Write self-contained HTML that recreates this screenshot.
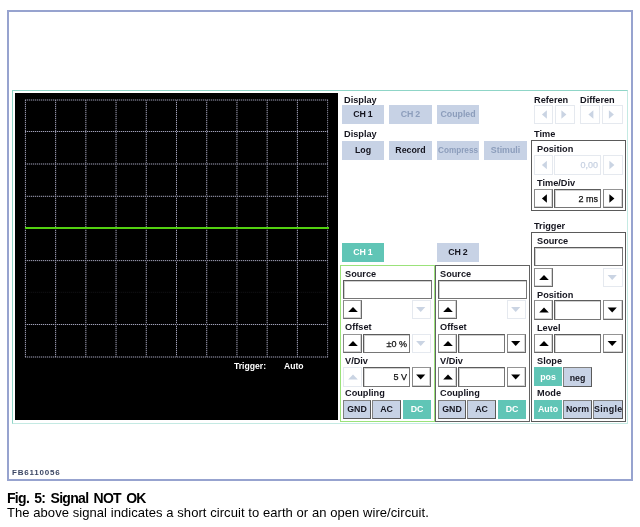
<!DOCTYPE html>
<html><head><meta charset="utf-8"><title>Fig. 5</title>
<style>
html,body{margin:0;padding:0;background:#fff;}
body{width:640px;height:527px;position:relative;overflow:hidden;font-family:"Liberation Sans",sans-serif;}
#w{position:absolute;left:0;top:0;width:640px;height:527px;will-change:transform;}
.a{position:absolute;white-space:nowrap;}
.lb{font-size:9.2px;font-weight:bold;color:#15151f;}
.tw{font-size:8.6px;font-weight:bold;color:#fff;}
.bt{font-size:8.8px;font-weight:bold;text-align:center;overflow:hidden;word-spacing:-0.6px;}
.fd{font-size:9px;-webkit-text-stroke:0.25px;}
.fb{font-size:8px;font-weight:bold;color:#3c4764;letter-spacing:0.8px;}
.cap1{font-size:14px;font-weight:bold;color:#000;line-height:16px;letter-spacing:-0.7px;word-spacing:2px;}
.cap2{font-size:13px;color:#000;line-height:15px;letter-spacing:0.065px;}
.g{stroke:#a9a9bd;stroke-width:1;stroke-dasharray:1 1;shape-rendering:crispEdges;}
</style></head><body><div id="w">
<div class="a " style="left:7px;top:10px;width:626px;height:471px;border:2px solid #97a3cf;box-sizing:border-box;"></div>
<div class="a " style="left:12px;top:90px;width:616px;height:334px;border:1px solid;border-color:#8fd5c7 #c4eae3 #c4eae3 #8fd5c7;box-sizing:border-box;"></div>
<div class="a " style="left:15px;top:93px;width:323px;height:327px;background:#000;"></div>
<svg class="a" style="left:0;top:0" width="640" height="527"><defs><pattern id="dv" x="0" y="100" width="1" height="2" patternUnits="userSpaceOnUse"><rect x="0" y="0" width="1" height="1" fill="#a0a0b6"/><rect x="0" y="1" width="1" height="1" fill="#28282f"/></pattern><pattern id="dh" x="25" y="0" width="2" height="1" patternUnits="userSpaceOnUse"><rect x="0" y="0" width="1" height="1" fill="#a0a0b6"/><rect x="1" y="0" width="1" height="1" fill="#28282f"/></pattern></defs><rect x="24.90" y="100" width="1" height="257" fill="url(#dv)" opacity="1" transform="translate(0,0)"/><rect x="55.12" y="100" width="1" height="257" fill="url(#dv)" opacity="1" transform="translate(0,0)"/><rect x="85.34" y="100" width="1" height="257" fill="url(#dv)" opacity="1" transform="translate(0,0)"/><rect x="115.56" y="100" width="1" height="257" fill="url(#dv)" opacity="1" transform="translate(0,0)"/><rect x="145.78" y="100" width="1" height="257" fill="url(#dv)" opacity="1" transform="translate(0,0)"/><rect x="176.00" y="100" width="1" height="257" fill="url(#dv)" opacity="1" transform="translate(0,0)"/><rect x="206.22" y="100" width="1" height="257" fill="url(#dv)" opacity="1" transform="translate(0,0)"/><rect x="236.44" y="100" width="1" height="257" fill="url(#dv)" opacity="1" transform="translate(0,0)"/><rect x="266.66" y="100" width="1" height="257" fill="url(#dv)" opacity="1" transform="translate(0,0)"/><rect x="296.88" y="100" width="1" height="257" fill="url(#dv)" opacity="1" transform="translate(0,0)"/><rect x="327.10" y="100" width="1" height="257" fill="url(#dv)" opacity="0.8" transform="translate(0,0)"/><g transform="translate(0,99.5)"><rect x="25" y="0" width="303" height="1" fill="url(#dh)" opacity="1"/></g><g transform="translate(0,131.0)"><rect x="25" y="0" width="303" height="1" fill="url(#dh)" opacity="1"/></g><g transform="translate(0,163.5)"><rect x="25" y="0" width="303" height="1" fill="url(#dh)" opacity="1"/></g><g transform="translate(0,195.8)"><rect x="25" y="0" width="303" height="1" fill="url(#dh)" opacity="1"/></g><g transform="translate(0,260.1)"><rect x="25" y="0" width="303" height="1" fill="url(#dh)" opacity="1"/></g><g transform="translate(0,291.8)"><rect x="25" y="0" width="303" height="1" fill="url(#dh)" opacity="0.1"/></g><g transform="translate(0,324.0)"><rect x="25" y="0" width="303" height="1" fill="url(#dh)" opacity="1"/></g><g transform="translate(0,356.5)"><rect x="25" y="0" width="303" height="1" fill="url(#dh)" opacity="1"/></g><rect x="25" y="227" width="304" height="2" fill="#52d010"/></svg>
<div class="a tw" style="left:234px;top:359px;height:14px;line-height:14px;">Trigger:</div>
<div class="a tw" style="left:284px;top:359px;height:14px;line-height:14px;">Auto</div>
<div class="a lb" style="left:344px;top:93px;height:14px;line-height:14px;">Display</div>
<div class="a bt" style="left:342px;top:105px;width:42px;height:19px;background:#c7d2e5;color:#15151f;line-height:19px;">CH 1</div>
<div class="a bt" style="left:389px;top:105px;width:43px;height:19px;background:#c7d2e5;color:#8c9dbb;line-height:19px;">CH 2</div>
<div class="a bt" style="left:437px;top:105px;width:42px;height:19px;background:#c7d2e5;color:#8c9dbb;line-height:19px;">Coupled</div>
<div class="a lb" style="left:344px;top:127px;height:14px;line-height:14px;">Display</div>
<div class="a bt" style="left:342px;top:141px;width:42px;height:19px;background:#c7d2e5;color:#15151f;line-height:19px;">Log</div>
<div class="a bt" style="left:389px;top:141px;width:43px;height:19px;background:#c7d2e5;color:#15151f;line-height:19px;">Record</div>
<div class="a bt" style="left:437px;top:141px;width:42px;height:19px;background:#c7d2e5;color:#8c9dbb;line-height:19px;"><span style="font-size:8.2px">Compress</span></div>
<div class="a bt" style="left:484px;top:141px;width:43px;height:19px;background:#c7d2e5;color:#8c9dbb;line-height:19px;">Stimuli</div>
<div class="a lb" style="left:534px;top:93px;height:14px;line-height:14px;">Referen</div>
<div class="a lb" style="left:580px;top:93px;height:14px;line-height:14px;">Differen</div>
<div class="a " style="left:534px;top:105px;width:19px;height:19px;background:#fff;border:1px solid;border-color:#e5e9ef;box-sizing:border-box;"><svg width="19" height="19" style="position:absolute;left:-1px;top:-1px"><polygon points="12.9,5.25 12.9,13.75 7.9,9.5" fill="#cad4e3"/></svg></div>
<div class="a " style="left:555px;top:105px;width:20px;height:19px;background:#fff;border:1px solid;border-color:#e5e9ef;box-sizing:border-box;"><svg width="20" height="19" style="position:absolute;left:-1px;top:-1px"><polygon points="6.4,5.25 6.4,13.75 11.4,9.5" fill="#cad4e3"/></svg></div>
<div class="a " style="left:580px;top:105px;width:20px;height:19px;background:#fff;border:1px solid;border-color:#e5e9ef;box-sizing:border-box;"><svg width="20" height="19" style="position:absolute;left:-1px;top:-1px"><polygon points="13.4,5.25 13.4,13.75 8.4,9.5" fill="#cad4e3"/></svg></div>
<div class="a " style="left:602px;top:105px;width:21px;height:19px;background:#fff;border:1px solid;border-color:#e5e9ef;box-sizing:border-box;"><svg width="21" height="19" style="position:absolute;left:-1px;top:-1px"><polygon points="6.9,5.25 6.9,13.75 11.9,9.5" fill="#cad4e3"/></svg></div>
<div class="a lb" style="left:534px;top:127px;height:14px;line-height:14px;">Time</div>
<div class="a " style="left:531px;top:140px;width:95px;height:71px;border:1px solid #5a5a5a;box-sizing:border-box;background:#fff;"></div>
<div class="a lb" style="left:537px;top:142px;height:14px;line-height:14px;">Position</div>
<div class="a " style="left:534px;top:155px;width:19px;height:20px;background:#fff;border:1px solid;border-color:#e5e9ef;box-sizing:border-box;"><svg width="19" height="20" style="position:absolute;left:-1px;top:-1px"><polygon points="12.9,5.75 12.9,14.25 7.9,10.0" fill="#cad4e3"/></svg></div>
<div class="a fd" style="left:554px;top:155px;width:47px;height:20px;background:#fff;border:1px solid;border-color:#e5e9ef;box-sizing:border-box;line-height:18px;color:#c8d2e2;text-align:right;padding-right:2px;">0,00</div>
<div class="a " style="left:603px;top:155px;width:20px;height:20px;background:#fff;border:1px solid;border-color:#e5e9ef;box-sizing:border-box;"><svg width="20" height="20" style="position:absolute;left:-1px;top:-1px"><polygon points="6.4,5.75 6.4,14.25 11.4,10.0" fill="#cad4e3"/></svg></div>
<div class="a lb" style="left:537px;top:176px;height:14px;line-height:14px;">Time/Div</div>
<div class="a " style="left:534px;top:189px;width:19px;height:19px;background:#fff;border:1px solid;border-color:#949494 #6a6a6a #6a6a6a #888;box-sizing:border-box;box-shadow:inset -1px -1px 0 #d4d4d4;"><svg width="19" height="19" style="position:absolute;left:-1px;top:-1px"><polygon points="12.9,5.25 12.9,13.75 7.9,9.5" fill="#000"/></svg></div>
<div class="a fd" style="left:554px;top:189px;width:47px;height:19px;background:#fff;border:1px solid;border-color:#5c5c5c #767676 #767676 #5c5c5c;box-shadow:inset 1px 1px 0 #d0d0d0;box-sizing:border-box;line-height:19px;color:#111;text-align:right;padding-right:2px;">2 ms</div>
<div class="a " style="left:603px;top:189px;width:20px;height:19px;background:#fff;border:1px solid;border-color:#949494 #6a6a6a #6a6a6a #888;box-sizing:border-box;box-shadow:inset -1px -1px 0 #d4d4d4;"><svg width="20" height="19" style="position:absolute;left:-1px;top:-1px"><polygon points="6.4,5.25 6.4,13.75 11.4,9.5" fill="#000"/></svg></div>
<div class="a bt" style="left:342px;top:243px;width:42px;height:19px;background:#60c5b6;color:#fff;line-height:19px;">CH 1</div>
<div class="a bt" style="left:437px;top:243px;width:42px;height:19px;background:#c7d2e5;color:#15151f;line-height:19px;">CH 2</div>
<div class="a " style="left:340px;top:265px;width:95px;height:157px;border:1px solid #9be27a;box-sizing:border-box;"></div>
<div class="a lb" style="left:345px;top:267px;height:14px;line-height:14px;">Source</div>
<div class="a fd" style="left:343px;top:280px;width:89px;height:19px;background:#fff;border:1px solid;border-color:#5c5c5c #767676 #767676 #5c5c5c;box-shadow:inset 1px 1px 0 #d0d0d0;box-sizing:border-box;line-height:17px;color:#111;text-align:right;padding-right:2px;"></div>
<div class="a " style="left:343px;top:300px;width:19px;height:19px;background:#fff;border:1px solid;border-color:#949494 #6a6a6a #6a6a6a #888;box-sizing:border-box;box-shadow:inset -1px -1px 0 #d4d4d4;"><svg width="19" height="19" style="position:absolute;left:-1px;top:-1px"><polygon points="5.2,12.1 14.8,12.1 10.0,7.1" fill="#000"/></svg></div>
<div class="a " style="left:412px;top:300px;width:19px;height:19px;background:#fff;border:1px solid;border-color:#e5e9ef;box-sizing:border-box;"><svg width="19" height="19" style="position:absolute;left:-1px;top:-1px"><polygon points="4.1,7.0 13.3,7.0 8.7,11.9" fill="#cad4e3"/></svg></div>
<div class="a lb" style="left:345px;top:320px;height:14px;line-height:14px;">Offset</div>
<div class="a " style="left:343px;top:334px;width:19px;height:19px;background:#fff;border:1px solid;border-color:#949494 #6a6a6a #6a6a6a #888;box-sizing:border-box;box-shadow:inset -1px -1px 0 #d4d4d4;"><svg width="19" height="19" style="position:absolute;left:-1px;top:-1px"><polygon points="5.2,12.1 14.8,12.1 10.0,7.1" fill="#000"/></svg></div>
<div class="a fd" style="left:363px;top:334px;width:47px;height:19px;background:#fff;border:1px solid;border-color:#5c5c5c #767676 #767676 #5c5c5c;box-shadow:inset 1px 1px 0 #d0d0d0;box-sizing:border-box;line-height:19px;color:#111;text-align:right;padding-right:2px;">±0 %</div>
<div class="a " style="left:412px;top:334px;width:19px;height:19px;background:#fff;border:1px solid;border-color:#e5e9ef;box-sizing:border-box;"><svg width="19" height="19" style="position:absolute;left:-1px;top:-1px"><polygon points="4.1,7.0 13.3,7.0 8.7,11.9" fill="#cad4e3"/></svg></div>
<div class="a lb" style="left:345px;top:354px;height:14px;line-height:14px;">V/Div</div>
<div class="a " style="left:343px;top:367px;width:19px;height:20px;background:#fff;border:1px solid;border-color:#e5e9ef;box-sizing:border-box;"><svg width="19" height="20" style="position:absolute;left:-1px;top:-1px"><polygon points="5.2,12.6 14.8,12.6 10.0,7.6" fill="#cad4e3"/></svg></div>
<div class="a fd" style="left:363px;top:367px;width:47px;height:20px;background:#fff;border:1px solid;border-color:#5c5c5c #767676 #767676 #5c5c5c;box-shadow:inset 1px 1px 0 #d0d0d0;box-sizing:border-box;line-height:18px;color:#111;text-align:right;padding-right:2px;">5 V</div>
<div class="a " style="left:412px;top:367px;width:19px;height:20px;background:#fff;border:1px solid;border-color:#949494 #6a6a6a #6a6a6a #888;box-sizing:border-box;box-shadow:inset -1px -1px 0 #d4d4d4;"><svg width="19" height="20" style="position:absolute;left:-1px;top:-1px"><polygon points="4.1,7.5 13.3,7.5 8.7,12.4" fill="#000"/></svg></div>
<div class="a lb" style="left:345px;top:386px;height:14px;line-height:14px;">Coupling</div>
<div class="a bt" style="left:343px;top:400px;width:28px;height:19px;background:#c7d2e5;color:#15151f;border:1px solid;border-color:#808080 #5a5a5a #5a5a5a #808080;box-sizing:border-box;line-height:17px;">GND</div>
<div class="a bt" style="left:372px;top:400px;width:29px;height:19px;background:#c7d2e5;color:#15151f;border:1px solid;border-color:#808080 #5a5a5a #5a5a5a #808080;box-sizing:border-box;line-height:17px;">AC</div>
<div class="a bt" style="left:403px;top:400px;width:28px;height:19px;background:#60c5b6;color:#fff;line-height:19px;">DC</div>
<div class="a " style="left:435px;top:265px;width:95px;height:157px;border:1px solid #626262;box-sizing:border-box;"></div>
<div class="a lb" style="left:440px;top:267px;height:14px;line-height:14px;">Source</div>
<div class="a fd" style="left:438px;top:280px;width:89px;height:19px;background:#fff;border:1px solid;border-color:#5c5c5c #767676 #767676 #5c5c5c;box-shadow:inset 1px 1px 0 #d0d0d0;box-sizing:border-box;line-height:17px;color:#111;text-align:right;padding-right:2px;"></div>
<div class="a " style="left:438px;top:300px;width:19px;height:19px;background:#fff;border:1px solid;border-color:#949494 #6a6a6a #6a6a6a #888;box-sizing:border-box;box-shadow:inset -1px -1px 0 #d4d4d4;"><svg width="19" height="19" style="position:absolute;left:-1px;top:-1px"><polygon points="5.2,12.1 14.8,12.1 10.0,7.1" fill="#000"/></svg></div>
<div class="a " style="left:507px;top:300px;width:19px;height:19px;background:#fff;border:1px solid;border-color:#e5e9ef;box-sizing:border-box;"><svg width="19" height="19" style="position:absolute;left:-1px;top:-1px"><polygon points="4.1,7.0 13.3,7.0 8.7,11.9" fill="#cad4e3"/></svg></div>
<div class="a lb" style="left:440px;top:320px;height:14px;line-height:14px;">Offset</div>
<div class="a " style="left:438px;top:334px;width:19px;height:19px;background:#fff;border:1px solid;border-color:#949494 #6a6a6a #6a6a6a #888;box-sizing:border-box;box-shadow:inset -1px -1px 0 #d4d4d4;"><svg width="19" height="19" style="position:absolute;left:-1px;top:-1px"><polygon points="5.2,12.1 14.8,12.1 10.0,7.1" fill="#000"/></svg></div>
<div class="a fd" style="left:458px;top:334px;width:47px;height:19px;background:#fff;border:1px solid;border-color:#5c5c5c #767676 #767676 #5c5c5c;box-shadow:inset 1px 1px 0 #d0d0d0;box-sizing:border-box;line-height:19px;color:#111;text-align:right;padding-right:2px;"></div>
<div class="a " style="left:507px;top:334px;width:19px;height:19px;background:#fff;border:1px solid;border-color:#949494 #6a6a6a #6a6a6a #888;box-sizing:border-box;box-shadow:inset -1px -1px 0 #d4d4d4;"><svg width="19" height="19" style="position:absolute;left:-1px;top:-1px"><polygon points="4.1,7.0 13.3,7.0 8.7,11.9" fill="#000"/></svg></div>
<div class="a lb" style="left:440px;top:354px;height:14px;line-height:14px;">V/Div</div>
<div class="a " style="left:438px;top:367px;width:19px;height:20px;background:#fff;border:1px solid;border-color:#949494 #6a6a6a #6a6a6a #888;box-sizing:border-box;box-shadow:inset -1px -1px 0 #d4d4d4;"><svg width="19" height="20" style="position:absolute;left:-1px;top:-1px"><polygon points="5.2,12.6 14.8,12.6 10.0,7.6" fill="#000"/></svg></div>
<div class="a fd" style="left:458px;top:367px;width:47px;height:20px;background:#fff;border:1px solid;border-color:#5c5c5c #767676 #767676 #5c5c5c;box-shadow:inset 1px 1px 0 #d0d0d0;box-sizing:border-box;line-height:18px;color:#111;text-align:right;padding-right:2px;"></div>
<div class="a " style="left:507px;top:367px;width:19px;height:20px;background:#fff;border:1px solid;border-color:#949494 #6a6a6a #6a6a6a #888;box-sizing:border-box;box-shadow:inset -1px -1px 0 #d4d4d4;"><svg width="19" height="20" style="position:absolute;left:-1px;top:-1px"><polygon points="4.1,7.5 13.3,7.5 8.7,12.4" fill="#000"/></svg></div>
<div class="a lb" style="left:440px;top:386px;height:14px;line-height:14px;">Coupling</div>
<div class="a bt" style="left:438px;top:400px;width:28px;height:19px;background:#c7d2e5;color:#15151f;border:1px solid;border-color:#808080 #5a5a5a #5a5a5a #808080;box-sizing:border-box;line-height:17px;">GND</div>
<div class="a bt" style="left:467px;top:400px;width:29px;height:19px;background:#c7d2e5;color:#15151f;border:1px solid;border-color:#808080 #5a5a5a #5a5a5a #808080;box-sizing:border-box;line-height:17px;">AC</div>
<div class="a bt" style="left:498px;top:400px;width:28px;height:19px;background:#60c5b6;color:#fff;line-height:19px;">DC</div>
<div class="a lb" style="left:534px;top:219px;height:14px;line-height:14px;">Trigger</div>
<div class="a " style="left:531px;top:232px;width:95px;height:190px;border:1px solid #5a5a5a;box-sizing:border-box;"></div>
<div class="a lb" style="left:537px;top:234px;height:14px;line-height:14px;">Source</div>
<div class="a fd" style="left:534px;top:247px;width:89px;height:19px;background:#fff;border:1px solid;border-color:#5c5c5c #767676 #767676 #5c5c5c;box-shadow:inset 1px 1px 0 #d0d0d0;box-sizing:border-box;line-height:17px;color:#111;text-align:right;padding-right:2px;"></div>
<div class="a " style="left:534px;top:268px;width:19px;height:19px;background:#fff;border:1px solid;border-color:#949494 #6a6a6a #6a6a6a #888;box-sizing:border-box;box-shadow:inset -1px -1px 0 #d4d4d4;"><svg width="19" height="19" style="position:absolute;left:-1px;top:-1px"><polygon points="5.2,12.1 14.8,12.1 10.0,7.1" fill="#000"/></svg></div>
<div class="a " style="left:603px;top:268px;width:20px;height:19px;background:#fff;border:1px solid;border-color:#e5e9ef;box-sizing:border-box;"><svg width="20" height="19" style="position:absolute;left:-1px;top:-1px"><polygon points="4.6,7.0 13.8,7.0 9.2,11.9" fill="#cad4e3"/></svg></div>
<div class="a lb" style="left:537px;top:288px;height:14px;line-height:14px;">Position</div>
<div class="a " style="left:534px;top:300px;width:19px;height:20px;background:#fff;border:1px solid;border-color:#949494 #6a6a6a #6a6a6a #888;box-sizing:border-box;box-shadow:inset -1px -1px 0 #d4d4d4;"><svg width="19" height="20" style="position:absolute;left:-1px;top:-1px"><polygon points="5.2,12.6 14.8,12.6 10.0,7.6" fill="#000"/></svg></div>
<div class="a fd" style="left:554px;top:300px;width:47px;height:20px;background:#fff;border:1px solid;border-color:#5c5c5c #767676 #767676 #5c5c5c;box-shadow:inset 1px 1px 0 #d0d0d0;box-sizing:border-box;line-height:18px;color:#111;text-align:right;padding-right:2px;"></div>
<div class="a " style="left:603px;top:300px;width:20px;height:20px;background:#fff;border:1px solid;border-color:#949494 #6a6a6a #6a6a6a #888;box-sizing:border-box;box-shadow:inset -1px -1px 0 #d4d4d4;"><svg width="20" height="20" style="position:absolute;left:-1px;top:-1px"><polygon points="4.6,7.5 13.8,7.5 9.2,12.4" fill="#000"/></svg></div>
<div class="a lb" style="left:537px;top:321px;height:14px;line-height:14px;">Level</div>
<div class="a " style="left:534px;top:334px;width:19px;height:19px;background:#fff;border:1px solid;border-color:#949494 #6a6a6a #6a6a6a #888;box-sizing:border-box;box-shadow:inset -1px -1px 0 #d4d4d4;"><svg width="19" height="19" style="position:absolute;left:-1px;top:-1px"><polygon points="5.2,12.1 14.8,12.1 10.0,7.1" fill="#000"/></svg></div>
<div class="a fd" style="left:554px;top:334px;width:47px;height:19px;background:#fff;border:1px solid;border-color:#5c5c5c #767676 #767676 #5c5c5c;box-shadow:inset 1px 1px 0 #d0d0d0;box-sizing:border-box;line-height:17px;color:#111;text-align:right;padding-right:2px;"></div>
<div class="a " style="left:603px;top:334px;width:20px;height:19px;background:#fff;border:1px solid;border-color:#949494 #6a6a6a #6a6a6a #888;box-sizing:border-box;box-shadow:inset -1px -1px 0 #d4d4d4;"><svg width="20" height="19" style="position:absolute;left:-1px;top:-1px"><polygon points="4.6,7.0 13.8,7.0 9.2,11.9" fill="#000"/></svg></div>
<div class="a lb" style="left:537px;top:354px;height:14px;line-height:14px;">Slope</div>
<div class="a bt" style="left:534px;top:367px;width:28px;height:19px;background:#60c5b6;color:#fff;line-height:19px;"><span style="position:relative;top:1px">pos</span></div>
<div class="a bt" style="left:563px;top:367px;width:29px;height:20px;background:#c7d2e5;color:#15151f;border:1px solid;border-color:#808080 #5a5a5a #5a5a5a #808080;box-sizing:border-box;line-height:18px;"><span style="position:relative;top:0.5px">neg</span></div>
<div class="a lb" style="left:537px;top:386px;height:14px;line-height:14px;">Mode</div>
<div class="a bt" style="left:534px;top:400px;width:28px;height:19px;background:#60c5b6;color:#fff;line-height:19px;">Auto</div>
<div class="a bt" style="left:563px;top:400px;width:29px;height:19px;background:#c7d2e5;color:#15151f;border:1px solid;border-color:#808080 #5a5a5a #5a5a5a #808080;box-sizing:border-box;line-height:17px;">Norm</div>
<div class="a bt" style="left:593px;top:400px;width:30px;height:19px;background:#c7d2e5;color:#15151f;border:1px solid;border-color:#808080 #5a5a5a #5a5a5a #808080;box-sizing:border-box;line-height:17px;"><span style="letter-spacing:0.35px;margin-right:-0.35px">Single</span></div>
<div class="a fb" style="left:12px;top:466px;height:14px;line-height:14px;">FB6110056</div>
<div class="a cap1" style="left:7px;top:490px;">Fig. 5: Signal NOT OK</div>
<div class="a cap2" style="left:7px;top:505px;">The above signal indicates a short circuit to earth or an open wire/circuit.</div>
</div></body></html>
